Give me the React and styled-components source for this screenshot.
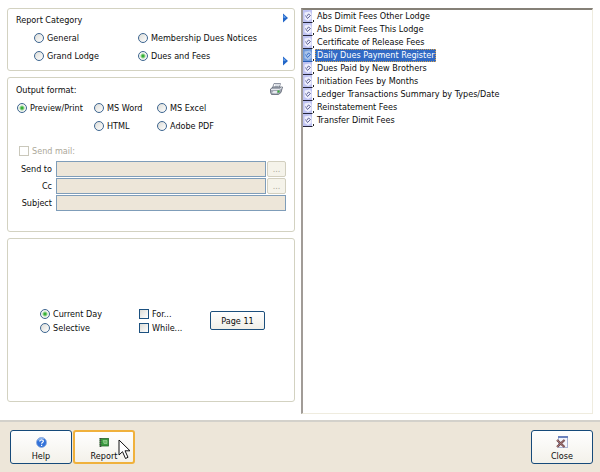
import React, { useState } from 'react';
import styled, { createGlobalStyle } from 'styled-components';

const GlobalStyle = createGlobalStyle`
  * {
    box-sizing: border-box;
  }

  body {
    margin: 0;
    background-color: #ffffff;
    color: #0c0c0c;
    font-family: 'DejaVu Sans Condensed', 'DejaVu Sans', sans-serif;
    font-stretch: condensed;
    font-size: 9px;
    line-height: 14px;
  }

  button, input {
    font: inherit;
    color: inherit;
    margin: 0;
  }
`;

const Page = styled.div`
  min-height: 100vh;
  display: flex;
  flex-direction: column;
`;

const Main = styled.main`
  flex: 1;
  display: grid;
  grid-template-columns: 72fr 73fr;
  gap: 6px;
  padding: 8px 7px 6px;
`;

const Panels = styled.div`
  display: flex;
  flex-direction: column;
  gap: 6px;
  padding-bottom: 12px;
`;

const Panel = styled.section`
  border: 1px solid #d3d2c1;
  border-radius: 3px;
  padding: ${(props) => props.$padding || '3px 8px'};
  flex: ${(props) => (props.$grow ? 1 : 'none')};
`;

const PanelHeader = styled.div`
  display: flex;
  justify-content: space-between;
  align-items: flex-start;
  height: 14px;
`;

const Title = styled.h2`
  margin: 0;
  font-size: 9px;
  font-weight: normal;
`;

const CategoryBody = styled.div`
  display: flex;
  justify-content: space-between;
  align-items: flex-end;
  padding: 4px 0 0 18px;
`;

const CategoryGrid = styled.div`
  display: grid;
  grid-template-columns: 104px auto;
  row-gap: 4px;
  padding-bottom: 3px;
`;

const FormatGrid = styled.div`
  display: grid;
  grid-template-columns: 77px 63px auto;
  row-gap: 4px;
  padding: 4px 0 0 1px;
`;

const Option = styled.label`
  display: flex;
  align-items: center;
  gap: 3px;
  white-space: nowrap;
  color: ${(props) => (props.$disabled ? '#aca899' : 'inherit')};
  grid-column-start: ${(props) => props.$column || 'auto'};
`;

const Radio = styled.input.attrs({ type: 'radio' })`
  appearance: none;
  flex: none;
  width: 10px;
  height: 10px;
  border: 1px solid #3d6590;
  border-radius: 50%;
  background: linear-gradient(135deg, #dcdcd7, #ffffff);

  &:checked {
    background: radial-gradient(circle, #21a121 0, #3fb53f 1px, #f4f6f1 3px);
  }
`;

const Checkbox = styled.input.attrs({ type: 'checkbox' })`
  appearance: none;
  flex: none;
  width: 10px;
  height: 10px;
  border: 1px solid #1c5180;
  background: linear-gradient(135deg, #dcdcd7, #ffffff);

  &:checked {
    background: #21a121;
  }

  &:disabled {
    border-color: #cac8bb;
    background: #ffffff;
  }
`;

const MailArea = styled.div`
  padding: 11px 0 0 3px;
`;

const MailForm = styled.div`
  display: grid;
  grid-template-columns: 37px 1fr;
  column-gap: 4px;
  row-gap: 1px;
  align-items: center;
  padding-top: 3px;
  margin-left: -4px;
`;

const FieldLabel = styled.label`
  text-align: right;
  white-space: nowrap;
`;

const FieldRow = styled.div`
  display: flex;
  gap: 1px;
`;

const TextField = styled.input.attrs({ type: 'text' })`
  flex: 1;
  min-width: 0;
  height: 16px;
  padding: 0 3px;
  border: 1px solid #7f9db9;
  border-radius: 0;
  background-color: #ede6d9;
`;

const BrowseButton = styled.button`
  width: 19px;
  height: 16px;
  padding: 0;
  border: 1px solid #d2cfbf;
  border-radius: 2px;
  background-color: #f5f3ea;
  color: #aca899;
  line-height: 12px;
`;

const FilterRow = styled.div`
  display: flex;
  align-items: flex-start;
`;

const FilterGroup = styled.div`
  width: ${(props) => props.$width};
`;

const PageButton = styled.button`
  width: 55px;
  height: 19px;
  margin-top: 4px;
  padding: 0;
  border: 1px solid #1c4f7c;
  border-radius: 2px;
  background: linear-gradient(#ffffff, #f0efe8);
`;

const ReportList = styled.ul`
  margin: 0;
  padding: 0;
  list-style: none;
  border: 1px solid #efecdf;
  border-top: 2px solid #858077;
  border-left: 2px solid #a19c97;
`;

const ReportItem = styled.li`
  display: flex;
  align-items: center;
  gap: 1px;
  height: 13px;
`;

const ReportName = styled.button`
  height: 13px;
  padding: 0 1px;
  border: 1px dotted ${(props) => (props.$selected ? '#d8a24a' : 'transparent')};
  background-color: ${(props) => (props.$selected ? '#316ac5' : 'transparent')};
  color: ${(props) => (props.$selected ? '#ffffff' : 'inherit')};
  line-height: 11px;
  white-space: nowrap;
`;

const Footer = styled.footer`
  display: flex;
  gap: 1px;
  padding: 8px 7px 8px 10px;
  border-top: 2px solid #d3d1cb;
  background-color: #ede6d9;
`;

const ToolButton = styled.button`
  position: relative;
  display: flex;
  flex-direction: column;
  align-items: center;
  justify-content: flex-end;
  gap: 2px;
  width: 62px;
  height: 34px;
  padding: 0;
  border: ${(props) => (props.$active ? '2px solid #f0b13c' : '1px solid #164a7a')};
  border-radius: 3px;
  background: linear-gradient(#ffffff, #f3f1ea);
  margin-left: ${(props) => (props.$last ? 'auto' : '0')};
  padding-bottom: ${(props) => (props.$active ? '0' : '1px')};
  line-height: 12px;
`;

const Pointer = styled.svg`
  position: absolute;
  left: 43px;
  top: 7px;
  pointer-events: none;
`;

const ArrowIcon = () => (
  <svg width="5" height="10" viewBox="0 0 5 10">
    <path d="M0 0.5L5 5L0 9.5Z" fill="#2266c8" />
    <path d="M0.5 2L3 4.5L0.5 5Z" fill="#6ea6ee" />
  </svg>
);

const PrinterIcon = () => (
  <svg width="16" height="12" viewBox="0 0 16 12">
    <path d="M4 0.5H10.5L9 5H2.5Z" fill="#ffffff" stroke="#737b8b" strokeWidth="0.8" />
    <path d="M5 2H9M4.5 3.5H8.5" stroke="#9aa4b5" strokeWidth="0.7" />
    <path d="M0.5 6L3 4H12.5L11 9.5L8.5 11.5H1.5L0.5 9.5Z" fill="#a3a8b4" stroke="#5e6472" strokeWidth="0.8" />
    <path d="M1 6.5H9.5L12 4.5" fill="none" stroke="#eef1f5" strokeWidth="0.9" />
    <path d="M2 10L3.5 8H7.5L6.5 10.5Z" fill="#e8ebf0" />
    <rect x="7.5" y="7.5" width="2" height="2" fill="#32b032" />
  </svg>
);

const ReportIcon = ({ selected }) => (
  <svg width="11" height="13" viewBox="0 0 11 13">
    <rect width="9" height="12" fill={selected ? '#6f99da' : '#bfc3f3'} />
    <path d="M1.5 2.5L7 1.5L8.5 4V9L5 11L1.5 9Z" fill={selected ? '#a9c3ea' : '#eeeefc'} />
    <path d="M0 12.5H9.5" fill="none" stroke={selected ? '#2a5db4' : '#26263c'} />
    <path d="M2.5 5.5L4.5 8.5L7.5 5.5L5.5 4L4 6" fill="none" stroke={selected ? '#316ac5' : '#555a91'} strokeWidth="0.9" />
    <rect x="10" y="10" width="1" height="2" fill="#222222" />
  </svg>
);

const HelpIcon = () => (
  <svg width="11" height="11" viewBox="0 0 11 11">
    <circle cx="5.5" cy="5.5" r="5" fill="#3272d9" stroke="#8ba9da" strokeWidth="0.8" />
    <path d="M2 3.5A4 4 0 0 1 8 2" fill="none" stroke="#a8c8f5" />
    <path d="M3.7 4.4C3.7 2.4 7.4 2.4 7.4 4.3C7.4 5.4 5.6 5.5 5.6 6.7M5.6 7.8V9" fill="none" stroke="#ffffff" strokeWidth="1.2" />
  </svg>
);

const BookIcon = () => (
  <svg width="10" height="10" viewBox="0 0 10 10">
    <rect x="1" y="0.5" width="8.5" height="7.5" fill="#3a9a3f" stroke="#28662c" strokeWidth="0.8" />
    <path d="M4 2.5H8V5.5H5Z" fill="#6fbb6b" stroke="#a7d8a2" strokeWidth="0.6" />
    <path d="M1.5 0V9" stroke="#444444" strokeWidth="1.6" strokeDasharray="1 1" />
  </svg>
);

const CloseIcon = () => (
  <svg width="12" height="12" viewBox="0 0 12 12">
    <rect x="2.5" y="0.5" width="9" height="11" fill="#f3f5fc" stroke="#a9b4d4" />
    <rect x="2" y="0" width="10" height="2" fill="#6d83bd" />
    <path d="M1 4L8.5 11M8.5 4L1 11" stroke="#6e4141" strokeWidth="2.2" />
    <path d="M1 4L8.5 11M8.5 4L1 11" stroke="#ad8585" strokeWidth="0.9" />
  </svg>
);

const reports = [
  'Abs Dimit Fees Other Lodge',
  'Abs Dimit Fees This Lodge',
  'Certificate of Release Fees',
  'Daily Dues Payment Register',
  'Dues Paid by New Brothers',
  'Initiation Fees by Months',
  'Ledger Transactions Summary by Types/Date',
  'Reinstatement Fees',
  'Transfer Dimit Fees'
];

const categories = ['General', 'Membership Dues Notices', 'Grand Lodge', 'Dues and Fees'];

const formats = [
  { name: 'Preview/Print' },
  { name: 'MS Word' },
  { name: 'MS Excel' },
  { name: 'HTML', column: 2 },
  { name: 'Adobe PDF' }
];

const App = () => {
  const [category, setCategory] = useState('Dues and Fees');
  const [format, setFormat] = useState('Preview/Print');
  const [period, setPeriod] = useState('Current Day');
  const [report, setReport] = useState('Daily Dues Payment Register');

  return (
    <Page>
      <GlobalStyle />
      <Main>
        <Panels>
          <Panel $padding="4px 6px 4px 8px">
            <PanelHeader>
              <Title>Report Category</Title>
              <ArrowIcon />
            </PanelHeader>
            <CategoryBody>
              <CategoryGrid>
                {categories.map((name) => (
                  <Option key={name}>
                    <Radio name="category" checked={category === name} onChange={() => setCategory(name)} />
                    {name}
                  </Option>
                ))}
              </CategoryGrid>
              <ArrowIcon />
            </CategoryBody>
          </Panel>

          <Panel $padding="5px 8px 20px">
            <PanelHeader>
              <Title>Output format:</Title>
              <PrinterIcon />
            </PanelHeader>
            <FormatGrid>
              {formats.map(({ name, column }) => (
                <Option key={name} $column={column}>
                  <Radio name="format" checked={format === name} onChange={() => setFormat(name)} />
                  {name}
                </Option>
              ))}
            </FormatGrid>
            <MailArea>
              <Option $disabled>
                <Checkbox disabled />
                Send mail:
              </Option>
              <MailForm>
                <FieldLabel htmlFor="sendTo">Send to</FieldLabel>
                <FieldRow>
                  <TextField id="sendTo" disabled />
                  <BrowseButton disabled>...</BrowseButton>
                </FieldRow>
                <FieldLabel htmlFor="cc">Cc</FieldLabel>
                <FieldRow>
                  <TextField id="cc" disabled />
                  <BrowseButton disabled>...</BrowseButton>
                </FieldRow>
                <FieldLabel htmlFor="subject">Subject</FieldLabel>
                <FieldRow>
                  <TextField id="subject" disabled />
                </FieldRow>
              </MailForm>
            </MailArea>
          </Panel>

          <Panel $grow $padding="68px 8px 8px 32px">
            <FilterRow>
              <FilterGroup $width="99px">
                {['Current Day', 'Selective'].map((name) => (
                  <Option key={name}>
                    <Radio name="period" checked={period === name} onChange={() => setPeriod(name)} />
                    {name}
                  </Option>
                ))}
              </FilterGroup>
              <FilterGroup $width="71px">
                <Option>
                  <Checkbox />
                  For...
                </Option>
                <Option>
                  <Checkbox />
                  While...
                </Option>
              </FilterGroup>
              <PageButton>Page 11</PageButton>
            </FilterRow>
          </Panel>
        </Panels>

        <ReportList>
          {reports.map((name) => (
            <ReportItem key={name}>
              <ReportIcon selected={report === name} />
              <ReportName $selected={report === name} onClick={() => setReport(name)}>
                {name}
              </ReportName>
            </ReportItem>
          ))}
        </ReportList>
      </Main>

      <Footer>
        <ToolButton>
          <HelpIcon />
          Help
        </ToolButton>
        <ToolButton $active>
          <BookIcon />
          Report
          <Pointer width="13" height="21" viewBox="0 0 13 21">
            <path
              d="M1 1V16L4.5 12.7L7.5 19.5L10 18.3L7 11.8H12Z"
              fill="#ffffff"
              stroke="#111111"
            />
          </Pointer>
        </ToolButton>
        <ToolButton $last>
          <CloseIcon />
          Close
        </ToolButton>
      </Footer>
    </Page>
  );
};

export default App;
